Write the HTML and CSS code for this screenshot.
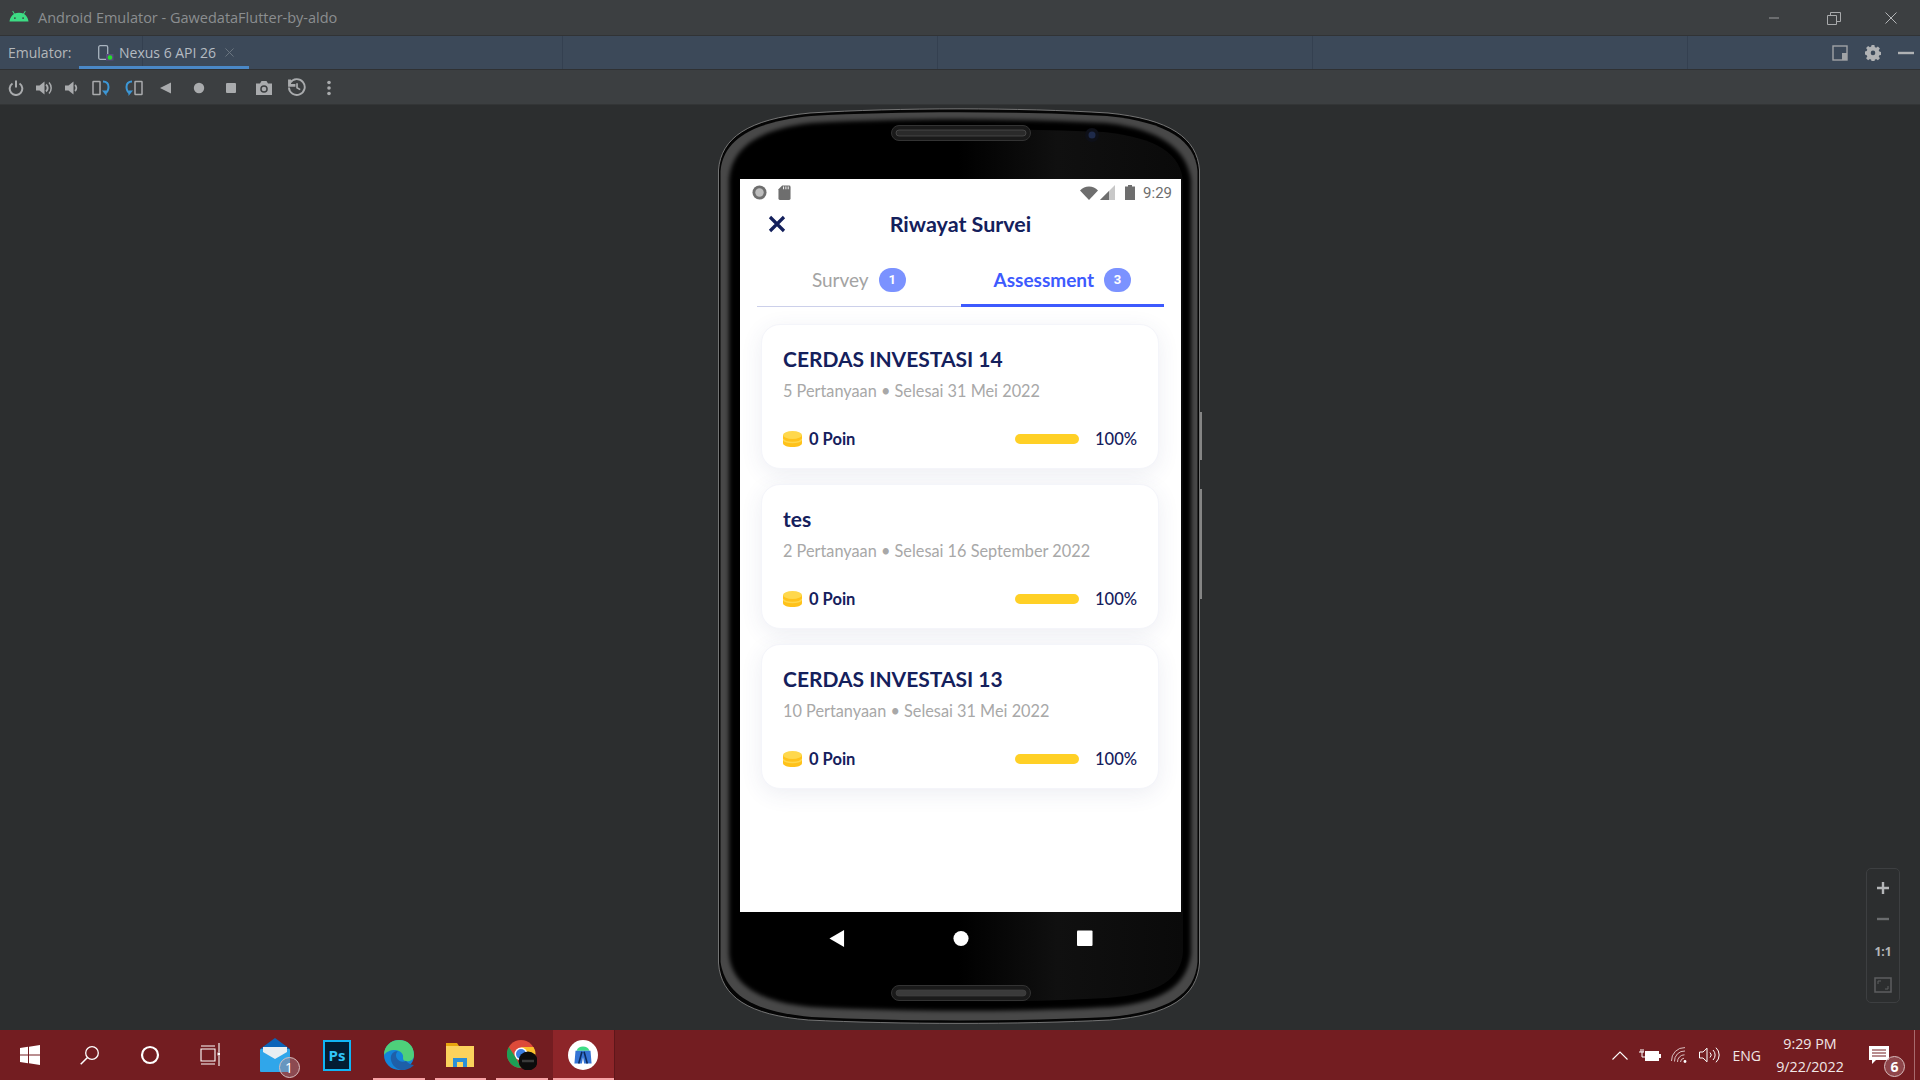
FILE: index.html
```html
<!DOCTYPE html>
<html lang="id">
<head>
<meta charset="utf-8">
<title>Android Emulator</title>
<link rel="stylesheet" href="styles.css">
</head>
<body>
<div class="window">
  <header class="titlebar">
    <svg class="droid" viewBox="0 0 22 13"><path fill="#3ddc84" d="M0.5 12.5C1 8.5 3 5.6 5.4 4.2L3.6 1.2 4.4 .7 6.3 3.8C7.5 3.3 9.2 3 11 3s3.5.3 4.7.8L17.6.7l.8.5-1.8 3C19 5.6 21 8.5 21.5 12.5z"/><circle cx="6.5" cy="8.8" r="1" fill="#3c3f41"/><circle cx="15.5" cy="8.8" r="1" fill="#3c3f41"/></svg>
    <span class="title-text">Android Emulator - GawedataFlutter-by-aldo</span>
    <div class="win-controls">
      <svg viewBox="0 0 12 12"><path d="M1 6h10" stroke="#9a9c9e" fill="none"/></svg>
      <svg viewBox="0 0 14 14"><path d="M.5 4.5h9v9h-9zM3.5 4.5v-3h10v9h-4" stroke="#a8aaac" fill="none"/></svg>
      <svg viewBox="0 0 12 12"><path d="M.5.5l11 11M11.5.5l-11 11" stroke="#b4b6b8" fill="none"/></svg>
    </div>
  </header>

  <div class="tabbar">
    <span class="tab-label">Emulator:</span>
    <div class="tab">
      <svg class="tab-icon" viewBox="0 0 16 16"><rect x=".7" y=".7" width="9" height="13.6" rx="1.5" fill="none" stroke="#a9b4bf" stroke-width="1.3"/><rect x="8" y="9" width="7.5" height="6.5" fill="#5a4a80"/><circle cx="12" cy="12.5" r="2.3" fill="#22e02a"/></svg>
      <span class="tab-name">Nexus 6 API 26</span>
      <svg class="tab-close" viewBox="0 0 10 10"><path d="M.5.5l9 9M9.5.5l-9 9" stroke="#6f7a85" fill="none"/></svg>
    </div>
    <div class="tab-tools">
      <svg class="tool-a" viewBox="0 0 16 16"><rect x="1" y="1" width="14" height="14" fill="none" stroke="#a0a3a6" stroke-width="1.4"/><rect x="10" y="8" width="5" height="7" fill="#a0a3a6"/></svg>
      <svg class="tool-b" viewBox="0 0 16 16"><path fill="#b0b2b4" d="M6.6.5h2.8l.4 2.1 1.3.6 1.8-1.2 2 2-1.2 1.8.6 1.3 2.100.4v2.800l-2.100.4-.6 1.300 1.200 1.800-2 2-1.800-1.200-1.300.6-.4 2.100H6.600l-.4-2.100-1.300-.6-1.800 1.200-2-2 1.200-1.800-.6-1.300L-.4 9.800V7l2.100-.4.6-1.300L1.100 3.500l2-2 1.800 1.200 1.300-.6z"/><circle cx="8" cy="8.400" r="2.300" fill="#3c4959"/></svg>
      <svg class="tool-c" viewBox="0 0 16 4"><rect width="16" height="2.400" y=".8" fill="#b0b2b4"/></svg>
    </div>
  </div>

  <div class="toolbar">
    <svg viewBox="0 0 16 16"><path d="M4.500 3.500a6.300 6.300 0 1 0 7 0M8 .5v7" fill="none" stroke="#a9abad" stroke-width="2"/></svg>
    <svg viewBox="0 0 17 16"><path fill="#a9abad" d="M0 5.500h3.500L8.500 1.500v13l-5-4H0z"/><path d="M10 4.500a4.500 4.500 0 0 1 0 7" fill="none" stroke="#a9abad" stroke-width="2"/><path d="M13 2.500a8 8 0 0 1 0 11" fill="none" stroke="#a9abad" stroke-width="1.500"/></svg>
    <svg viewBox="0 0 16 16"><path fill="#a9abad" d="M2 5.500h3.500L10.500 1.500v13l-5-4H2z"/><path d="M12 5a4 4 0 0 1 0 6" fill="none" stroke="#a9abad" stroke-width="1.800"/></svg>
    <svg class="wide" viewBox="0 0 18 16"><rect x="1" y="1.500" width="7" height="13" rx=".5" fill="none" stroke="#a9abad" stroke-width="1.500"/><path d="M11 1.500c4 0 5.500 2 5.500 5.500 0 3-1 5-3.500 6.500" fill="none" stroke="#3c97d6" stroke-width="2"/><path d="M10 10.500h4.500v5.500z" fill="#3c97d6"/></svg>
    <svg class="wide" viewBox="0 0 18 16"><rect x="10" y="1.500" width="7" height="13" rx=".5" fill="none" stroke="#a9abad" stroke-width="1.500"/><path d="M7 1.500C3 1.500 1.500 3.500 1.500 7c0 3 1 5 3.500 6.500" fill="none" stroke="#3c97d6" stroke-width="2"/><path d="M8 10.500H3.500V16z" fill="#3c97d6"/></svg>
    <svg viewBox="0 0 16 16"><path fill="#a9abad" d="M2 8l11-5.500v11z"/></svg>
    <svg viewBox="0 0 16 16"><circle cx="8" cy="8" r="5.200" fill="#a9abad"/></svg>
    <svg viewBox="0 0 16 16"><rect x="3" y="3" width="10" height="10" rx="1" fill="#a9abad"/></svg>
    <svg class="wide" viewBox="0 0 18 16"><path fill="#a9abad" d="M1 3.500h4L6.500 1h5L13 3.500h4V15H1z"/><circle cx="9" cy="9" r="3.800" fill="#3c3f41"/><circle cx="9" cy="9" r="2.300" fill="#a9abad"/></svg>
    <svg class="wide" viewBox="0 0 18 18"><path d="M3 4.500A7.500 7.500 0 1 1 1.800 9" fill="none" stroke="#a9abad" stroke-width="1.800"/><path fill="#a9abad" d="M1 1.500h2.800v4.200H8v2.500H1z"/><path d="M9.500 5v4.300l3 1.700" fill="none" stroke="#a9abad" stroke-width="1.600"/></svg>
    <svg viewBox="0 0 16 16"><circle cx="8" cy="2.500" r="1.800" fill="#a9abad"/><circle cx="8" cy="8" r="1.800" fill="#a9abad"/><circle cx="8" cy="13.500" r="1.800" fill="#a9abad"/></svg>
  </div>

  <main class="stage">
    <div class="phone">
      <svg class="bezel" viewBox="0 0 482 917">
        <defs>
          <linearGradient id="sheen" x1="0" x2="1" y1="0" y2="0">
            <stop offset="0" stop-color="#000"/><stop offset=".5" stop-color="#000"/><stop offset=".72" stop-color="#101010"/><stop offset="1" stop-color="#0a0a0a"/>
          </linearGradient>
          <filter id="soft" x="-5%" y="-5%" width="110%" height="110%"><feGaussianBlur stdDeviation="2"/></filter>
        </defs>
        <path d="M.5 62C3 30 30 11 92 5 180-.5 302-.5 390 5c62 6 89 25 91.500 57V855c-2.500 34-30 52-90 57-90 4.500-211 4.500-301 0-60-5-87.500-23-90-57z" fill="#050505" stroke="#8c8c8c" stroke-width=".8"/>
        <path d="M2.500 63C5 33 32 14 93 8c88-5 208-5 296 0 61 6 88 25 90.500 55V854c-2.500 32-29 50-89 55-90 4.500-207 4.500-297 0-59-5-86-23-91-55z" fill="#484848"/>
        <path d="M11 72C13 41 39 21 94 15c90-5 204-5 294 0 54 6 81 26 85 57V846c-4 30-26 48-80 53-90 5-208 5-300 0-54-5-80-24-82-53z" fill="#000" filter="url(#soft)"/>
        <path d="M16 74C18 46 42 30 96 24c90-4 200-4 290 0 54 6 77 22 79 50V844c-2 26-22 42-76 46-90 5-206 5-296 0-54-4-73-20-77-46z" fill="url(#sheen)"/>
        <rect x="173.500" y="17.500" width="139" height="15" rx="7.500" fill="#1a1a1a" stroke="#333"/>
        <rect x="178" y="22" width="130" height="6" rx="3" fill="#2a2a2a" stroke="#555" stroke-width=".7"/>
        <circle cx="374" cy="27" r="7" fill="#0e1018"/>
        <circle cx="374" cy="27" r="3.500" fill="#1e2a4a"/>
        <rect x="173.500" y="877.500" width="139" height="15" rx="7.500" fill="#1a1a1a" stroke="#333"/>
        <rect x="178" y="882" width="130" height="6" rx="3" fill="#3a3a3a" stroke="#444" stroke-width=".7"/>
      </svg>
      <div class="side-key side-key-a"></div>
      <div class="side-key side-key-b"></div>

      <div class="screen">
        <div class="statusbar">
          <div class="status-left">
            <svg viewBox="0 0 16 16"><circle cx="8" cy="8" r="7.500" fill="#6e6e6e"/><circle cx="8" cy="8" r="4.500" fill="#bdbdbd"/></svg>
            <svg viewBox="0 0 14 16"><path fill="#6e6e6e" d="M4.500.5H12A1.500 1.500 0 0 1 13.500 2v12.500A1.500 1.500 0 0 1 12 16H2A1.500 1.500 0 0 1 .5 14.500V4.500z"/><path stroke="#fff" d="M6 1.500v3M8.500 1.500v3M11 1.500v3"/></svg>
          </div>
          <div class="status-right">
            <svg class="s-wifi" viewBox="0 0 18 14"><path fill="#6e6e6e" d="M0 4.500C2.500 2 5.500.5 9 .5s6.500 1.500 9 4L9 14z"/></svg>
            <svg class="s-signal" viewBox="0 0 15 15"><path fill="#c8c8c8" d="M15 0v15H0z"/><path fill="#6e6e6e" d="M9 6v9H0z"/></svg>
            <svg class="s-batt" viewBox="0 0 10 15"><path fill="#6e6e6e" d="M3 0h4v1.500h3V15H0V1.500h3z"/></svg>
            <span class="clock">9:29</span>
          </div>
        </div>

        <div class="appbar">
          <svg class="close-x" viewBox="0 0 18 18"><path d="M2 2l14 14M16 2L2 16" stroke="#14205c" stroke-width="3.200" fill="none"/></svg>
          <h1>Riwayat Survei</h1>
        </div>

        <div class="tabs">
          <div class="s-tab">
            <span>Survey</span><b class="badge">1</b>
          </div>
          <div class="s-tab is-active">
            <span>Assessment</span><b class="badge">3</b>
          </div>
        </div>

        <div class="cards">
          <article class="card">
            <h2>CERDAS INVESTASI 14</h2>
            <p>5 Pertanyaan • Selesai 31 Mei 2022</p>
            <div class="card-foot">
              <svg class="coin" viewBox="0 0 19 16"><path fill="#ffc21a" d="M0 4h19v8c0 2.500-4 4-9.500 4S0 14.500 0 12z"/><ellipse cx="9.500" cy="4" rx="9.500" ry="4" fill="#ffd84d"/><path d="M0 8c1 2.500 5 3.500 9.500 3.500S18 10.500 19 8" fill="none" stroke="#ffd84d" stroke-width="1.600"/></svg>
              <span class="points">0 Poin</span>
              <span class="bar"></span>
              <span class="pct">100%</span>
            </div>
          </article>
          <article class="card">
            <h2>tes</h2>
            <p>2 Pertanyaan • Selesai 16 September 2022</p>
            <div class="card-foot">
              <svg class="coin" viewBox="0 0 19 16"><path fill="#ffc21a" d="M0 4h19v8c0 2.500-4 4-9.500 4S0 14.500 0 12z"/><ellipse cx="9.500" cy="4" rx="9.500" ry="4" fill="#ffd84d"/><path d="M0 8c1 2.500 5 3.500 9.500 3.500S18 10.500 19 8" fill="none" stroke="#ffd84d" stroke-width="1.600"/></svg>
              <span class="points">0 Poin</span>
              <span class="bar"></span>
              <span class="pct">100%</span>
            </div>
          </article>
          <article class="card">
            <h2>CERDAS INVESTASI 13</h2>
            <p>10 Pertanyaan • Selesai 31 Mei 2022</p>
            <div class="card-foot">
              <svg class="coin" viewBox="0 0 19 16"><path fill="#ffc21a" d="M0 4h19v8c0 2.500-4 4-9.500 4S0 14.500 0 12z"/><ellipse cx="9.500" cy="4" rx="9.500" ry="4" fill="#ffd84d"/><path d="M0 8c1 2.500 5 3.500 9.500 3.500S18 10.500 19 8" fill="none" stroke="#ffd84d" stroke-width="1.600"/></svg>
              <span class="points">0 Poin</span>
              <span class="bar"></span>
              <span class="pct">100%</span>
            </div>
          </article>
        </div>
      </div>

      <div class="navbar">
        <svg viewBox="0 0 16 18"><path fill="#fff" d="M0 9L15.500 0v18z"/></svg>
        <svg viewBox="0 0 18 18"><circle cx="9" cy="9" r="8.500" fill="#fff"/></svg>
        <svg viewBox="0 0 17 17"><rect width="16.500" height="16.500" rx="1" fill="#fff"/></svg>
      </div>
    </div>

    <div class="zoom-panel">
      <svg viewBox="0 0 14 14"><path d="M7 1v12M1 7h12" stroke="#b4b6b8" stroke-width="2.400" fill="none"/></svg>
      <svg viewBox="0 0 14 14"><path d="M1 7h12" stroke="#6a6c6e" stroke-width="2.400" fill="none"/></svg>
      <span class="one-to-one">1:1</span>
      <svg viewBox="0 0 18 16"><rect x="1" y="1" width="16" height="14" fill="none" stroke="#5c5e60" stroke-width="1.500"/><path d="M4 7V4h3M14 9v3h-3" fill="none" stroke="#5c5e60"/></svg>
    </div>
  </main>

  <footer class="taskbar">
    <div class="sys-icon"><svg class="i-win" viewBox="0 0 20 20"><path fill="#fff" d="M0 3l8-1.200v7.700H0zM9 1.700L20 0v9.500H9zM0 10.500h8v7.700L0 17zM9 10.500h11V20L9 18.300z"/></svg></div>
    <div class="sys-icon"><svg class="i-search" viewBox="0 0 20 20"><circle cx="12" cy="8" r="6.300" fill="none" stroke="#fff" stroke-width="1.300"/><path d="M7.500 12.500L.7 19.300" stroke="#fff" stroke-width="1.500"/></svg></div>
    <div class="sys-icon"><svg class="i-search" viewBox="0 0 20 20"><circle cx="10" cy="10" r="8" fill="none" stroke="#fff" stroke-width="2.200"/></svg></div>
    <div class="sys-icon"><svg class="i-view" viewBox="0 0 20 24"><path d="M1 3h14M1 6h14v12H1zM1 21h14M19 0v9M19 13v10" fill="none" stroke="#fff" stroke-width="1.100"/><rect x="17.500" y="9.500" width="3" height="3" fill="#fff"/></svg></div>
    <div class="task-icon has-count">
      <svg class="i-mail" viewBox="0 0 30 34"><path fill="#0b63b8" d="M15 0L30 11H0z"/><rect y="11" width="30" height="23" rx="1" fill="#30a6ea"/><path fill="#e9eef2" d="M3 9h24v5L15 21 3 14z"/></svg>
      <span class="count">1</span>
    </div>
    <div class="task-icon"><span class="ps">Ps</span></div>
    <div class="task-icon is-open"><svg class="i-app" viewBox="0 0 30 30"><circle cx="15" cy="15" r="15" fill="#1484d8"/><path fill="#4ed07a" d="M15 0c9 0 15 6 15 15 0 5-4 7-8 6-2 0-3-1-3-3 1-4-3-8-8-8C6 10 2 12 0 15 0 6 7 0 15 0z"/><path fill="#1e5fa8" d="M22 21c-5 2-10-1-10-6 0-2 1-3 2-4-5 0-8 4-7 9 1 6 7 11 14 10 4-1 7-3 9-5-2 0-5-1-8-4z"/></svg></div>
    <div class="task-icon is-open"><svg class="i-app" viewBox="0 0 30 30"><path fill="#e8a50e" d="M1 3h11l2 3H1z"/><rect x="1" y="6" width="28" height="21" fill="#fbd25c"/><path fill="#2a8fd8" d="M8 18h14v9h-4v-5h-6v5H8z"/></svg></div>
    <div class="task-icon is-open"><svg class="i-app" viewBox="0 0 30 30"><circle cx="14" cy="14" r="14" fill="#dd4b39"/><path fill="#1d9f55" d="M14 28A14 14 0 0 1 1.800 7L9 18l5 10z"/><path fill="#fbc02d" d="M14 7h12.500A14 14 0 0 1 14 28l6-11z"/><circle cx="14" cy="14" r="6.500" fill="#fff"/><circle cx="14" cy="14" r="5" fill="#3a7ee0"/><circle cx="21" cy="21" r="9.500" fill="#0c0c0c"/><path d="M15 21h12" stroke="#3a3a3a" stroke-width="2.500"/></svg></div>
    <div class="task-icon is-current"><svg class="i-app" viewBox="0 0 28 28"><circle cx="14" cy="14" r="14" fill="#fff"/><path fill="#3ddc84" d="M8 10c1-3 3-4 6-4s5 1 6 4z"/><path fill="#3474d4" d="M7 10h14l1 12h-7l-1-6-1 6H6z"/><path d="M13 11l-3 11M15 11l3 11" stroke="#0c2a5c" stroke-width="1.500"/></svg></div>
    <div class="tray">
      <svg class="t-chev" viewBox="0 0 16 9"><path d="M.5 8.500L8 1l7.500 7.500" stroke="#fff" fill="none" stroke-width="1.100"/></svg>
      <svg class="t-batt" viewBox="0 0 22 13"><path d="M0 3h5M2 0v3M4 0v3M3 3v5h3" stroke="#fff" fill="none"/><rect x="6.500" y="2.500" width="13" height="9" fill="#fff" stroke="#fff"/><rect x="20" y="5" width="2" height="4" fill="#fff"/></svg>
      <svg class="t-wifi" viewBox="0 0 17 16"><path d="M.5 14A13 13 0 0 1 14 .6M3.500 14.500A10 10 0 0 1 14 4M6.500 15a7 7 0 0 1 7-7.200M9.500 15a4 4 0 0 1 3.500-3.800" stroke="#e7d3d4" fill="none" stroke-width=".9"/><circle cx="14" cy="14.500" r="1.400" fill="#fff"/></svg>
      <svg class="t-vol" viewBox="0 0 21 16"><path d="M.5 5h3.500L8 1.200v13.600L4 11H.5z" stroke="#fff" fill="none"/><path d="M11 5.500a3.500 3.500 0 0 1 0 5M14 3a7 7 0 0 1 0 10M17 .7a10 10 0 0 1 0 14.600" stroke="#fff" fill="none"/></svg>
      <span class="lang">ENG</span>
      <div class="datetime"><span>9:29 PM</span><span>9/22/2022</span></div>
      <div class="notif">
        <svg viewBox="0 0 20 19"><path fill="#fff" d="M0 0h20v14H7l-4 4v-4H0z"/><path d="M3 4h14M3 7h14M3 10h14" stroke="#731d21"/></svg>
        <span class="count count-b">6</span>
      </div>
    </div>
  </footer>
</div>
</body>
</html>
```
FILE: styles.css
```css
* { box-sizing: border-box; }
html, body { margin: 0; padding: 0; height: 100%; }
body { font-family: "Open Sans", "Noto Sans", sans-serif; background: #2c2e2f; overflow: hidden; }
.window { display: flex; flex-direction: column; width: 1920px; height: 1080px; }

.titlebar { height: 36px; flex: none; display: flex; align-items: center; background: #3c3f41; border-bottom: 1px solid #313335; padding-left: 9px; }
.droid { width: 20px; height: 12px; margin-right: 9px; margin-top: -3px; }
.title-text { font-size: 14.5px; color: #8b8e90; }
.win-controls { margin-left: auto; display: flex; align-items: center; gap: 47px; padding-right: 23px; }
.win-controls svg { width: 12px; height: 12px; display: block; }
.win-controls svg:nth-child(2) { width: 14px; height: 14px; }
.win-controls svg:nth-child(3) { margin-left: -3px; }

.tabbar { height: 34px; flex: none; display: flex; align-items: center; position: relative; padding-left: 8px; color: #bbb; font-size: 14px; border-bottom: 1px solid #2f3133;
  background: repeating-linear-gradient(90deg, #3c4959 0, #3c4959 374px, #344050 374px, #344050 375px) 188px 0; }
.tab-label { width: 71px; color: #b4b7ba; }
.tab { position: relative; width: 170px; height: 33px; display: flex; align-items: center; padding-left: 19px; }
.tab::after { content: ""; position: absolute; left: 0; right: 0; bottom: 0; height: 3px; background: #4a88c7; }
.tab-icon { width: 16px; height: 16px; margin-right: 5px; }
.tab-name { color: #b4bbc2; white-space: nowrap; }
.tab-close { width: 9px; height: 9px; margin-left: 9px; }
.tab-tools { margin-left: auto; display: flex; align-items: center; padding-right: 6px; }
.tool-a { width: 16px; height: 16px; margin-right: 17px; }
.tool-b { width: 16px; height: 17px; margin-right: 17px; }
.tool-c { width: 16px; height: 4px; }

.toolbar { height: 35px; flex: none; display: flex; align-items: center; gap: 15px; padding: 1px 0 0 8px; background: #3c3f41; border-bottom: 1px solid #333536; }
.toolbar svg { width: 16px; height: 16px; display: block; flex: none; }
.toolbar svg.wide { width: 18px; }
.toolbar svg:nth-child(2) { margin-left: -3px; width: 17px; }
.toolbar svg:nth-child(3) { margin-left: -5px; }
.toolbar svg:nth-child(4) { margin-left: -2px; }
.toolbar svg:nth-child(7) { margin-left: 2px; }
.toolbar svg:nth-child(8), .toolbar svg:nth-child(9) { margin-left: 1px; }
.toolbar svg:nth-child(10) { margin-left: -1px; width: 19px; height: 19px; }

.stage { flex: 1; position: relative; background: #2c2e2f; display: flex; justify-content: center; padding: 3px 2px 0 0; }
.phone { position: relative; width: 482px; height: 917px; padding: 71px 19px 0 22px; }
.bezel { position: absolute; inset: 0; width: 482px; height: 917px; }
.side-key { position: absolute; right: -2px; width: 2px; background: #858585; }
.side-key-a { top: 304px; height: 48px; }
.side-key-b { top: 381px; height: 110px; }

.screen { position: relative; width: 441px; height: 733px; background: #fff; display: flex; flex-direction: column; }
.statusbar { height: 26px; flex: none; display: flex; align-items: center; justify-content: space-between; padding: 1px 9px 0 12px; }
.status-left { display: flex; gap: 11px; align-items: center; }
.status-left svg { width: 15px; height: 15px; display: block; }
.status-left svg:last-child { width: 13px; }
.status-right { display: flex; align-items: center; }
.s-wifi { width: 18px; height: 14px; }
.s-signal { width: 15px; height: 15px; margin-left: 2px; }
.s-batt { width: 10px; height: 15px; margin-left: 10px; }
.clock { font-family: "Roboto", sans-serif; font-size: 15px; color: #6e6e6e; margin-left: 8px; }

.appbar { height: 36px; flex: none; position: relative; display: flex; align-items: center; justify-content: center; margin-top: 1px; }
.close-x { position: absolute; left: 28px; top: 9px; width: 18px; height: 18px; }
.appbar h1 { margin: 0; font: 700 21.5px "Lato", sans-serif; color: #14205c; }

.tabs { margin: 18px 17px 0; display: grid; grid-template-columns: 1fr 1fr; flex: none; }
.s-tab { height: 47px; display: flex; align-items: center; justify-content: center; gap: 10px; padding-bottom: 7px; font: 400 19px "Lato", sans-serif; color: #a3a3a3; border-bottom: 1px solid #ccd0ea; }
.s-tab.is-active { color: #3d5afe; font-weight: 700; border-bottom: 3px solid #3d5afe; padding-bottom: 5px; }
.badge { width: 27px; height: 24px; border-radius: 12px; background: #7b92ff; color: #fff; font: 700 13px "Roboto", sans-serif; display: flex; align-items: center; justify-content: center; }

.cards { display: flex; flex-direction: column; gap: 15px; margin: 17px 22px 0 21px; }
.card { height: 145px; border-radius: 19px; background: #fff; padding: 21px 23px 0 21px; box-shadow: 0 5px 22px rgba(60, 70, 120, .09); border: 1px solid #f4f5fa; }
.card h2 { margin: 0; font: 700 21px/26px "Lato", sans-serif; color: #14205c; }
.card p { margin: 7px 0 0; font: 400 16.3px/24px "Lato", sans-serif; color: #a8a8a8; }
.card-foot { display: flex; align-items: center; margin-top: 26px; }
.coin { width: 19px; height: 16px; flex: none; }
.points { font: 700 16.5px "Lato", sans-serif; color: #14205c; margin-left: 7px; }
.bar { margin-left: auto; width: 64px; height: 10px; border-radius: 5px; background: #ffd026; }
.pct { font: 500 16.5px "Lato", sans-serif; color: #14205c; margin-left: 16px; width: 40px; text-align: right; }

.navbar { position: absolute; left: 111px; top: 822px; width: 264px; display: flex; justify-content: space-between; align-items: center; }
.navbar svg { width: 16px; height: 17px; display: block; }

.zoom-panel { position: absolute; left: 1866px; top: 763px; width: 34px; height: 135px; border: 1px solid #3d3f41; border-radius: 5px; display: flex; flex-direction: column; align-items: center; justify-content: space-between; padding: 12px 0 9px; }
.zoom-panel svg { width: 14px; height: 14px; display: block; }
.zoom-panel svg:last-child { width: 18px; height: 16px; }
.one-to-one { font: 700 12px "Open Sans", sans-serif; color: #b4b6b8; }

.taskbar { height: 50px; flex: none; display: flex; align-items: center; background: #731d21; }
.sys-icon { width: 60px; height: 50px; display: flex; align-items: center; justify-content: center; flex: none; }
.sys-icon:nth-child(4) { margin-right: 4.5px; }
.task-icon { position: relative; width: 61.7px; height: 50px; display: flex; align-items: center; justify-content: center; flex: none; }
.i-win { width: 20px; height: 20px; }
.i-search { width: 20px; height: 20px; }
.i-view { width: 20px; height: 24px; }
.i-mail { width: 30px; height: 34px; }
.i-app { width: 30px; height: 30px; }
.ps { width: 28px; height: 31px; border: 2px solid #11b5f5; background: #031d33; color: #31c5f8; font: 700 15px/27px "Open Sans", sans-serif; text-align: center; display: block; }
.is-open::after { content: ""; position: absolute; left: 5px; right: 5px; bottom: 0; height: 2px; background: #f7a3a6; }
.is-current { background: #8d2529; border-right: 1px solid #5e161a; }
.is-current::after { content: ""; position: absolute; left: 0; right: 0; bottom: 0; height: 2px; background: #f7a3a6; }
.count { position: absolute; left: 34px; top: 27px; width: 21px; height: 21px; border: 1px solid #d9bfc0; border-radius: 50%; background: rgba(170, 130, 140, .45); color: #fff; font: 400 14px/19px "Open Sans", sans-serif; text-align: center; }

.tray { margin-left: auto; display: flex; align-items: center; height: 50px; color: #f1e6e6; border-right: 1px solid #a86a6d; margin-right: 5px; }
.t-chev { width: 16px; height: 9px; margin-right: 11px; }
.t-batt { width: 22px; height: 13px; margin-right: 10px; }
.t-wifi { width: 17px; height: 16px; margin-right: 11px; }
.t-vol { width: 21px; height: 16px; margin-right: 13px; }
.lang { font-size: 14px; }
.datetime { display: flex; flex-direction: column; align-items: center; gap: 3px; width: 68px; margin-left: 15px; font-size: 14.3px; line-height: 20px; white-space: nowrap; }
.notif { position: relative; width: 70px; height: 50px; display: flex; align-items: center; justify-content: center; }
.notif svg { width: 20px; height: 19px; }
.count-b { left: 40px; top: 26px; font-weight: 700; background: rgba(170, 110, 115, .5); }
```
